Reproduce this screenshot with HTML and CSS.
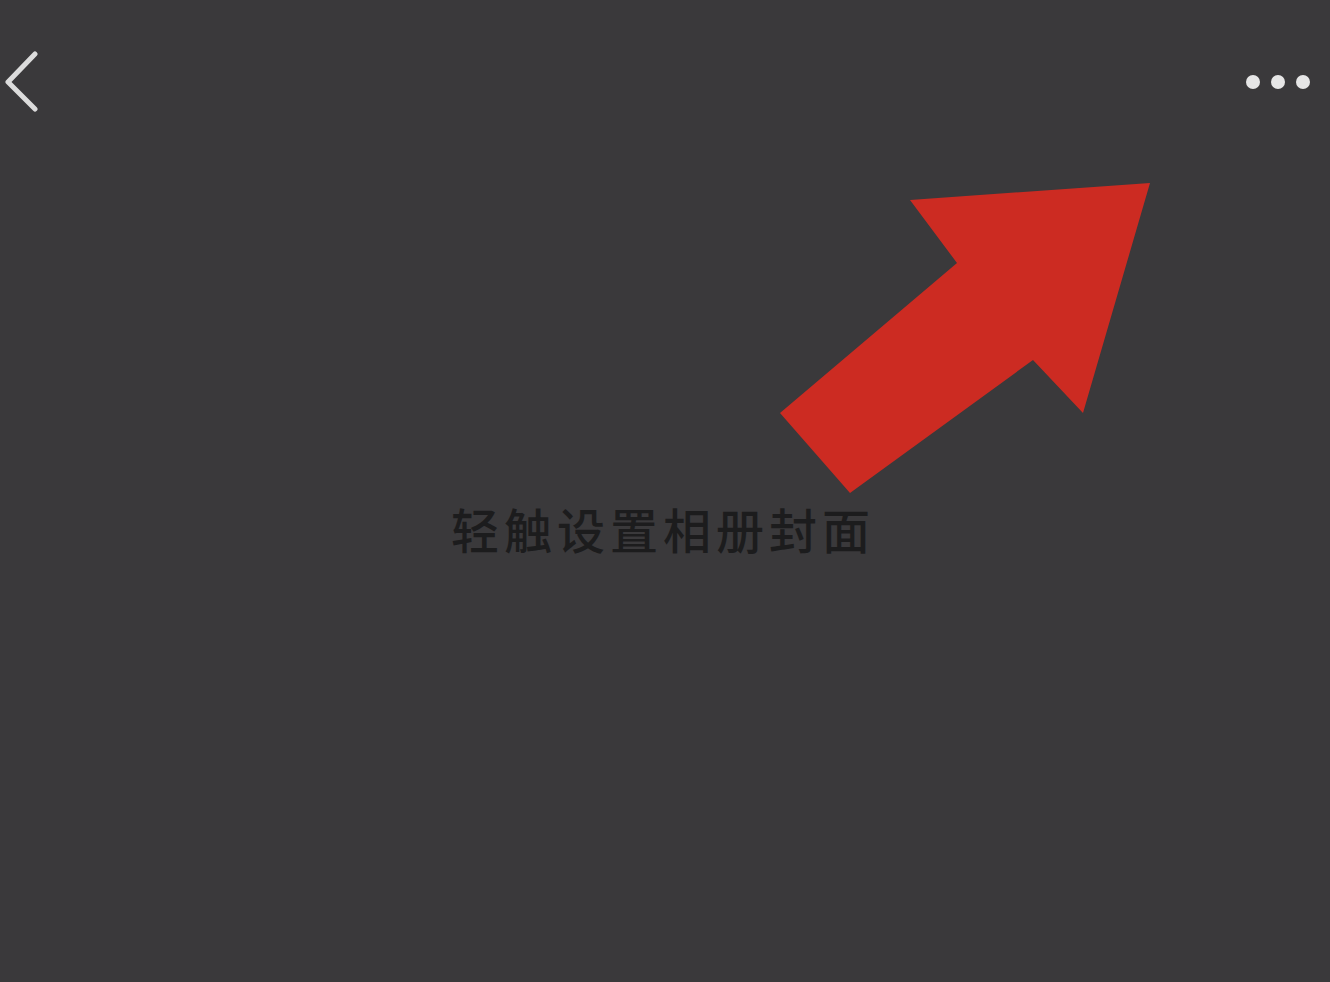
FILE: index.html
```html
<!DOCTYPE html>
<html lang="zh-CN">
<head>
<meta charset="utf-8">
<title>相册封面</title>
<link rel="stylesheet" href="styles.css">
</head>
<body>
<div class="screen">
  <header class="topbar">
    <button class="back" aria-label="返回">
      <svg width="40" height="64" viewBox="0 0 40 64">
        <polyline points="35,6 8,34 35,61" fill="none" stroke="#dcdcdc" stroke-width="5" stroke-linecap="round" stroke-linejoin="round"/>
      </svg>
    </button>
    <button class="more" aria-label="更多">
      <span class="dot"></span><span class="dot"></span><span class="dot"></span>
    </button>
  </header>
  <main class="cover">
    <p class="hint">轻触设置相册封面</p>
  </main>
  <svg class="arrow" width="1330" height="982" viewBox="0 0 1330 982">
    <polygon points="780,413 850,493 1033,360 1083,413 1150,183 910,200 957,263" fill="#cc2b22"/>
  </svg>
</div>
</body>
</html>
```

FILE: styles.css
```css
html, body {
  margin: 0;
  padding: 0;
  background: #3a393b;
  height: 100%;
  overflow: hidden;
}

.screen {
  position: relative;
  height: 982px;
  display: flex;
  flex-direction: column;
}

.topbar {
  height: 164px;
  display: flex;
  justify-content: space-between;
  align-items: flex-start;
  padding: 48px 20px 0 0;
  box-sizing: border-box;
}

.back {
  background: none;
  border: 0;
  padding: 0;
  margin: 0;
  width: 40px;
  height: 64px;
  display: block;
}

.back svg {
  display: block;
}

.more {
  background: none;
  border: 0;
  padding: 0;
  margin-top: 27px;
  display: flex;
  gap: 11px;
}

.dot {
  width: 14px;
  height: 14px;
  border-radius: 50%;
  background: #e6e6e6;
  display: block;
}

.cover {
  flex: 1;
  display: flex;
  justify-content: center;
  align-items: flex-start;
  padding-top: 334px;
  padding-right: 4px;
}

.hint {
  margin: 0;
  font-family: "Noto Sans CJK SC", "Noto Sans", sans-serif;
  font-size: 48px;
  line-height: 60px;
  letter-spacing: 5px;
  color: #1c1c1d;
  font-weight: 500;
}

.arrow {
  position: absolute;
  left: 0;
  top: 0;
  pointer-events: none;
}
```
